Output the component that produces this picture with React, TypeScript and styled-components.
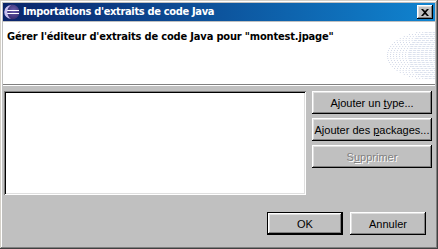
import React from "react";
import styled, { createGlobalStyle } from "styled-components";

const Global = createGlobalStyle`
  html, body { margin: 0; padding: 0; background: #c0c0c0; }
  #root { width: 438px; height: 249px; }
`;

const Window = styled.div`
  box-sizing: border-box;
  width: 438px;
  height: 249px;
  padding: 3px;
  background: #c0c0c0;
  display: flex;
  flex-direction: column;
  box-shadow: inset -1px -1px #404040, inset 1px 1px #d4d0c8,
    inset -2px -2px #808080, inset 2px 2px #ffffff;
`;

const TitleBar = styled.div`
  height: 18px;
  display: flex;
  align-items: center;
  padding: 0 2px 0 1px;
  background: linear-gradient(to right, #0a246a, #1084d0);
  flex-shrink: 0;
`;

const TitleText = styled.span`
  flex: 1;
  margin-left: 3px;
  color: #ffffff;
  font-family: "DejaVu Sans Condensed", "DejaVu Sans", sans-serif;
  font-weight: bold;
  font-size: 11px;
  letter-spacing: -0.33px;
  line-height: 18px;
  white-space: nowrap;
`;

const CloseButton = styled.div`
  width: 16px;
  height: 14px;
  box-sizing: border-box;
  background: #c0c0c0;
  display: flex;
  align-items: center;
  justify-content: center;
  box-shadow: inset -1px -1px #000, inset 1px 1px #fff,
    inset -2px -2px #808080, inset 2px 2px #dfdfdf;
`;

const Header = styled.div`
  margin-top: 1px;
  height: 62px;
  background: #ffffff;
  position: relative;
  flex-shrink: 0;
  border-bottom: 1px solid #808080;
  box-shadow: 0 1px 0 #ffffff;
`;

const Heading = styled.div`
  padding: 8px 0 0 4px;
  font-family: "DejaVu Sans Condensed", "DejaVu Sans", sans-serif;
  font-weight: bold;
  font-size: 11px;
  letter-spacing: -0.17px;
  color: #000;
  white-space: nowrap;
`;

const Banner = styled.svg`
  position: absolute;
  right: 0;
  top: 8px;
`;

const Body = styled.div`
  flex: 1;
  display: flex;
  flex-direction: column;
  padding: 6px 0 0 1px;
`;

const MainRow = styled.div`
  display: flex;
  gap: 6px;
`;

const ListBox = styled.div`
  box-sizing: border-box;
  width: 302px;
  height: 104px;
  background: #ffffff;
  box-shadow: inset 1px 1px #808080, inset -1px -1px #ffffff,
    inset 2px 2px #000000, inset -2px -2px #dfdfdf;
`;

const ButtonColumn = styled.div`
  display: flex;
  flex-direction: column;
  gap: 4px;
`;

const Button = styled.div<{ $width: number; $default?: boolean; $disabled?: boolean }>`
  box-sizing: border-box;
  width: ${(p) => p.$width}px;
  height: 23px;
  display: flex;
  align-items: center;
  justify-content: center;
  background: #c0c0c0;
  font-family: "Liberation Sans", Arial, sans-serif;
  font-size: 11px;
  color: ${(p) => (p.$disabled ? "#808080" : "#000000")};
  text-shadow: ${(p) => (p.$disabled ? "1px 1px 0 #ffffff" : "none")};
  white-space: nowrap;
  box-shadow: ${(p) =>
    p.$default
      ? "inset 0 0 0 1px #000, inset -2px -2px #000, inset 2px 2px #fff, inset -3px -3px #808080, inset 3px 3px #dfdfdf"
      : "inset -1px -1px #000, inset 1px 1px #fff, inset -2px -2px #808080, inset 2px 2px #dfdfdf"};
  u { text-decoration: underline; }
`;

const Footer = styled.div`
  margin-top: auto;
  margin-bottom: 11px;
  display: flex;
  justify-content: flex-end;
  gap: 7px;
  padding-right: 9px;
`;

const EclipseIcon = () => (
  <svg width="16" height="16" viewBox="0 0 16 16">
    <defs>
      <radialGradient id="eg" cx="0.6" cy="0.4" r="0.7">
        <stop offset="0" stopColor="#6b5fb0" />
        <stop offset="1" stopColor="#2b2160" />
      </radialGradient>
    </defs>
    <circle cx="8" cy="8" r="7.5" fill="url(#eg)" />
    <rect x="2" y="6" width="13" height="1" fill="#ffffff" />
    <rect x="2" y="9" width="13" height="1" fill="#ffffff" />
    <path d="M7 1.2 A6.8 6.8 0 0 0 7 14.8 A8 8 0 0 1 7 1.2 Z" fill="#c8c0f0" />
  </svg>
);

const CloseGlyph = () => (
  <svg width="8" height="7" viewBox="0 0 8 7">
    <path d="M0 0h2l2 2 2-2h2L5 3.5 8 7H6L4 5 2 7H0l3-3.5z" fill="#000" />
  </svg>
);

const BannerArt = () => {
  const rows: React.ReactNode[] = [];
  const cx = 50;
  const cy = 25;
  const rx = 48;
  const ry = 25;
  for (let y = 0; y <= 50; y += 2) {
    const dy = y - cy;
    const t = 1 - (dy * dy) / (ry * ry);
    if (t <= 0) continue;
    const half = rx * Math.sqrt(t);
    const x0 = cx - half;
    const mid = x0 + (50 - x0) * 0.45;
    rows.push(
      <g key={y}>
        <line x1={x0} y1={y + 0.5} x2={mid} y2={y + 0.5} stroke="#d3d9e8" strokeDasharray="1 2" />
        <line x1={mid} y1={y + 0.5} x2={50} y2={y + 0.5} stroke="#dce2ee" strokeDasharray="3 1" />
      </g>
    );
  }
  return (
    <Banner width="50" height="51" viewBox="0 0 50 51">
      {rows}
    </Banner>
  );
};

export default function App() {
  return (
    <>
      <Global />
      <Window>
        <TitleBar>
          <EclipseIcon />
          <TitleText>Importations d'extraits de code Java</TitleText>
          <CloseButton>
            <CloseGlyph />
          </CloseButton>
        </TitleBar>
        <Header>
          <Heading>Gérer l'éditeur d'extraits de code Java pour "montest.jpage"</Heading>
          <BannerArt />
        </Header>
        <Body>
          <MainRow>
            <ListBox />
            <ButtonColumn>
              <Button $width={120}>
                Ajouter un&nbsp;<u>t</u>ype...
              </Button>
              <Button $width={120}>
                Ajouter des&nbsp;<u>p</u>ackages...
              </Button>
              <Button $width={120} $disabled>
                S<u>u</u>pprimer
              </Button>
            </ButtonColumn>
          </MainRow>
          <Footer>
            <Button $width={76} $default>
              OK
            </Button>
            <Button $width={76}>Annuler</Button>
          </Footer>
        </Body>
      </Window>
    </>
  );
}
